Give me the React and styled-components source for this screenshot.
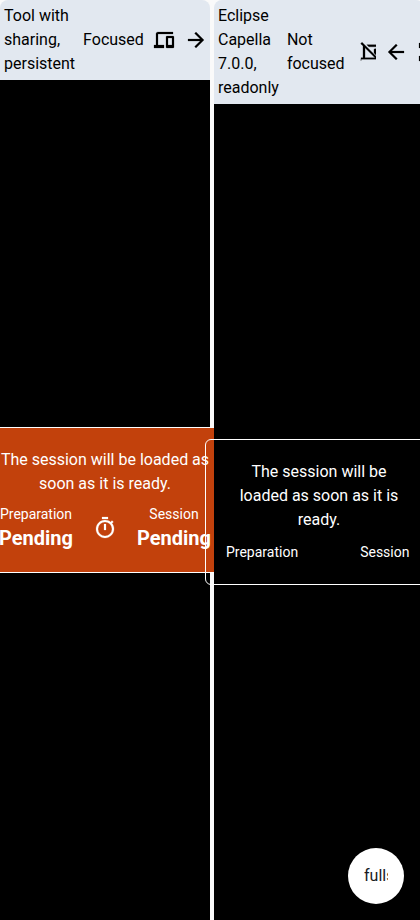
import React from "react";
import styled, { createGlobalStyle } from "styled-components";

const GlobalStyle = createGlobalStyle`
  *, *::before, *::after { box-sizing: border-box; }
  html, body { margin: 0; background: #fafafa; overflow: hidden; }
  body { font: 16px/24px Roboto, sans-serif; color: #000; }
`;

const Workspace = styled.main`
  display: flex;
  gap: 4px;
  height: 100vh;
`;

const Pane = styled.section`
  position: relative;
  flex: 0 0 50%;
  min-width: 0;
  display: flex;
  flex-direction: column;
`;

const PaneHeader = styled.header`
  display: flex;
  align-items: center;
  gap: 8px;
  padding: 4px;
  background: #e2e8f0;
  border-radius: 8px 8px 0 0;
`;

const IconButton = styled.button`
  display: flex;
  flex: none;
  width: 24px;
  height: 24px;
  padding: 0;
  border: 0;
  background: none;
  color: inherit;
`;

const ClippedStatus = styled.span`
  flex: none;
  width: 18px;
  height: 24px;
  margin-left: 5px;
  overflow: hidden;
`;

const Glyph = styled.svg`
  display: block;
  flex: none;
  width: 24px;
  height: 24px;
  fill: currentColor;
  stroke: currentColor;
  stroke-width: ${({ $weight }) => $weight};
`;

const Viewer = styled.div`
  flex: 1;
  display: flex;
  align-items: center;
  justify-content: center;
  background: #000;
`;

const Card = styled.div`
  flex: none;
  display: flex;
  flex-direction: column;
  gap: 8px;
  width: min-content;
  min-width: 228px;
  padding: 20px;
  border: 1px solid #fff;
  border-radius: 6px;
  background: ${({ $active }) => ($active ? "#c2410c" : "transparent")};
  color: #fff;
  text-align: center;
`;

const Message = styled.p`
  margin: 0;
`;

const Stages = styled.div`
  display: flex;
  align-items: center;
  gap: 20px;
`;

const Stage = styled.div`
  display: flex;
  flex-direction: column;
  align-items: center;
`;

const StageLabel = styled.span`
  font-size: 14px;
  line-height: 20px;
`;

const StageValue = styled.strong`
  font-size: 20px;
  line-height: 28px;
  font-weight: 700;
`;

const StageGap = styled.span`
  width: 22px;
  height: 24px;
`;

const FullscreenButton = styled.button`
  position: fixed;
  right: 16px;
  bottom: 16px;
  width: 56px;
  height: 56px;
  padding: 16px;
  border: 0;
  border-radius: 50%;
  background: #fff;
  color: #1a1b1f;
  font: 16px/24px Roboto, sans-serif;
`;

const ButtonLabel = styled.span`
  display: block;
  overflow: hidden;
  text-align: left;
  white-space: nowrap;
`;

const PATHS = {
  devices:
    "M80-160v-120h80v-440q0-33 23.5-56.5T240-800h600v80H240v440h240v120H80Zm520 0q-17 0-28.5-11.5T560-200v-400q0-17 11.5-28.5T600-640h240q17 0 28.5 11.5T880-600v400q0 17-11.5 28.5T840-160H600Zm40-120h160v-280H640v280Z",
  devicesOff:
    "M80-160v-120h80v-440q0-14 4-26l-98-98 56-56 784 784-56 56-164-164H80Zm160-520v400h400L240-680Zm74-120h526v80H394l-80-80ZM600-474v-126q0-40 40-40h240v90H680v156l-80-80Z",
  forward:
    "M647-440H160v-80h487L423-744l57-56 320 320-320 320-57-56 224-224Z",
  back:
    "m313-440 224 224-57 56-320-320 320-320 57 56-224 224h487v80H313Z",
  fullscreen:
    "M120-120v-200h80v120h120v80H120Zm520 0v-80h120v-120h80v200H640ZM120-640v-200h200v80H200v120h-80Zm640 0v-120H640v-80h200v200h-80Z",
  timer:
    "M360-840v-80h240v80H360Zm80 440h80v-240h-80v240Zm40 320q-74 0-139.5-28.5T226-186q-49-49-77.5-114.5T120-440q0-74 28.5-139.5T226-694q49-49 114.5-77.5T480-800q62 0 119 20t107 58l56-56 56 56-56 56q38 50 58 107t20 119q0 74-28.5 139.5T734-186q-49 49-114.5 77.5T480-80Zm0-80q116 0 198-82t82-198q0-116-82-198t-198-82q-116 0-198 82t-82 198q0 116 82 198t198 82Z",
};

const Icon = ({ name, weight = 8, viewBox = "0 -960 960 960" }) => (
  <Glyph viewBox={viewBox} $weight={weight} aria-hidden="true">
    <path d={PATHS[name]} />
  </Glyph>
);

const SessionCard = ({ active, value }) => (
  <Card $active={active}>
    <Message>The session will be loaded as soon as it is ready.</Message>
    <Stages>
      <Stage>
        <StageLabel>Preparation</StageLabel>
        {value && <StageValue>{value}</StageValue>}
      </Stage>
      {active ? <Icon name="timer" /> : <StageGap />}
      <Stage>
        <StageLabel>Session</StageLabel>
        {value && <StageValue>{value}</StageValue>}
      </Stage>
    </Stages>
  </Card>
);

export default function App() {
  return (
    <>
      <GlobalStyle />
      <Workspace>
        <Pane>
          <PaneHeader>
            <span>Tool with sharing, persistent</span>
            <span>Focused</span>
            <Icon name="devices" />
            <IconButton aria-label="Move right">
              <Icon name="forward" />
            </IconButton>
          </PaneHeader>
          <Viewer>
            <SessionCard active value="Pending" />
          </Viewer>
        </Pane>
        <Pane>
          <PaneHeader>
            <span>Eclipse Capella 7.0.0, readonly</span>
            <span>Not focused</span>
            <ClippedStatus>
              <Icon name="devicesOff" weight={12} viewBox="-40 -990 960 960" />
            </ClippedStatus>
            <IconButton aria-label="Move left">
              <Icon name="back" />
            </IconButton>
            <IconButton aria-label="Expand">
              <Icon name="fullscreen" />
            </IconButton>
          </PaneHeader>
          <Viewer>
            <SessionCard />
          </Viewer>
        </Pane>
      </Workspace>
      <FullscreenButton>
        <ButtonLabel>fullscreen</ButtonLabel>
      </FullscreenButton>
    </>
  );
}
